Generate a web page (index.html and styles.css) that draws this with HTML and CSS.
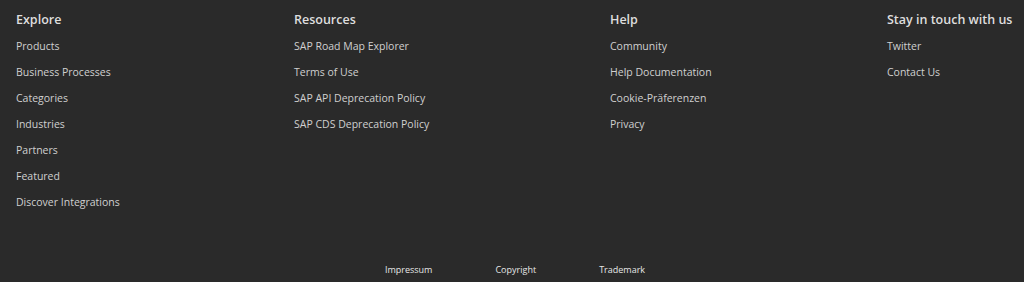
FILE: index.html
```html
<!DOCTYPE html>
<html lang="en">
  <head>
    <meta charset="UTF-8" />
    <meta name="viewport" content="width=device-width, initial-scale=1.0" />
    <title>Footer</title>
    <link rel="stylesheet" href="styles.css">
  </head>
  <body>
    <footer class="footer">
      <div class="columns">
        <div class="column">
          <h3>Explore</h3>
          <a href="#">Products</a>
          <a href="#">Business Processes</a>
          <a href="#">Categories</a>
          <a href="#">Industries</a>
          <a href="#">Partners</a>
          <a href="#">Featured</a>
          <a href="#">Discover Integrations</a>
        </div>
        <div class="column">
          <h3>Resources</h3>
          <a href="#">SAP Road Map Explorer</a>
          <a href="#">Terms of Use</a>
          <a href="#">SAP API Deprecation Policy</a>
          <a href="#">SAP CDS Deprecation Policy</a>
        </div>
        <div class="column">
          <h3>Help</h3>
          <a href="#">Community</a>
          <a href="#">Help Documentation</a>
          <a href="#">Cookie-Präferenzen</a>
          <a href="#">Privacy</a>
        </div>
        <div class="column">
          <h3>Stay in touch with us</h3>
          <a href="#">Twitter</a>
          <a href="#">Contact Us</a>
        </div>
      </div>
      <div class="legal">
        <a href="#">Impressum</a>
        <a href="#">Copyright</a>
        <a href="#">Trademark</a>
      </div>
    </footer>
  </body>
</html>
```

FILE: styles.css
```css
body {
  margin: 0;
  background: #2a2a2a;
  font-family: "Open Sans", sans-serif;
  color: #d0d0d0;
}

.footer {
  height: 282px;
  display: flex;
  flex-direction: column;
}

.columns {
  display: grid;
  grid-template-columns: 278px 316px 277px 1fr;
  padding: 11px 0 0 16px;
}

.column {
  display: flex;
  flex-direction: column;
  align-items: flex-start;
}

.column h3 {
  margin: 0 0 4px;
  font-size: 12.5px;
  line-height: 18px;
  font-weight: 600;
  color: #dedede;
  white-space: nowrap;
}

.column a {
  color: #d0d0d0;
  text-decoration: none;
  font-size: 10.5px;
  line-height: 26px;
}

.legal {
  margin-top: auto;
  display: flex;
  justify-content: center;
  gap: 63px;
  padding: 0 0 5px 6px;
}

.legal a {
  color: #e6e6e6;
  text-decoration: none;
  font-size: 9px;
  line-height: 14px;
}
```
